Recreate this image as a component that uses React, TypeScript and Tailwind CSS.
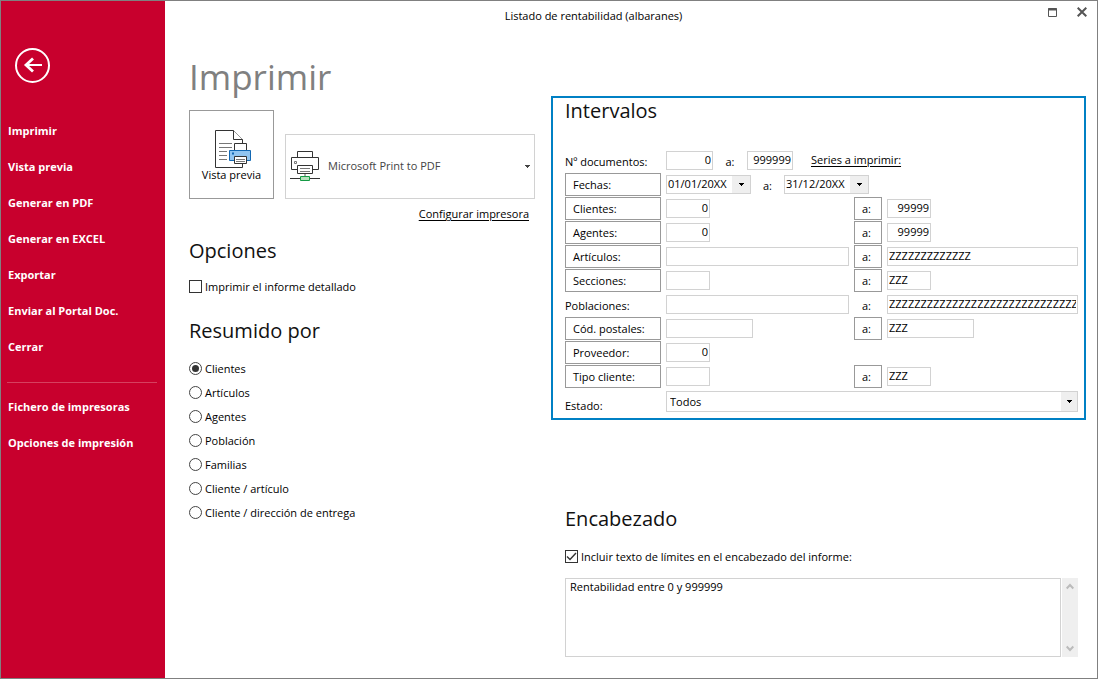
import { ReactNode } from "react";

const mainActions = [
  "Imprimir",
  "Vista previa",
  "Generar en PDF",
  "Generar en EXCEL",
  "Exportar",
  "Enviar al Portal Doc.",
  "Cerrar",
];

const printerActions = ["Fichero de impresoras", "Opciones de impresión"];

const groupings = [
  "Clientes",
  "Artículos",
  "Agentes",
  "Población",
  "Familias",
  "Cliente / artículo",
  "Cliente / dirección de entrega",
];

type Size = "short" | "medium" | "full";

type Range = {
  label: string;
  size: Size;
  from?: string;
  to?: string;
  numeric?: boolean;
  plain?: boolean;
  single?: boolean;
};

const ranges: Range[] = [
  { label: "Clientes:", size: "short", from: "0", to: "99999", numeric: true },
  { label: "Agentes:", size: "short", from: "0", to: "99999", numeric: true },
  { label: "Artículos:", size: "full", to: "ZZZZZZZZZZZZZ" },
  { label: "Secciones:", size: "short", to: "ZZZ" },
  { label: "Poblaciones:", size: "full", to: "ZZZZZZZZZZZZZZZZZZZZZZZZZZZZZZZZ", plain: true },
  { label: "Cód. postales:", size: "medium", to: "ZZZ" },
  { label: "Proveedor:", size: "short", from: "0", numeric: true, single: true },
  { label: "Tipo cliente:", size: "short", to: "ZZZ" },
];

const sizes: Record<Size, string> = {
  short: "w-11",
  medium: "w-[87px]",
  full: "w-full",
};

const rowGrid = "grid h-6 grid-cols-[96px_183fr_28px_191fr] items-start gap-x-[5px]";

const BackIcon = () => (
  <svg width="37" height="37" viewBox="0 0 37 37" fill="none" stroke="white">
    <circle cx="18.5" cy="18.5" r="16.5" strokeWidth="2" />
    <path d="M28 18H12" strokeWidth="2" />
    <path d="M19 11.5L12 18L19 24.5" strokeWidth="2.8" />
  </svg>
);

const PreviewIcon = () => (
  <svg className="ml-1" width="37" height="38" viewBox="0 0 37 38" fill="white" stroke="#333">
    <path d="M.5 .5H18.5L27.5 9.5V37.5H.5Z" />
    <path d="M18.5 .5V9.5H27.5" />
    <path d="M4 13.5H17M4 17.5H17M4 21.5H12M4 25.5H12M4 29.5H12" stroke="#777" />
    <path d="M19.5 20.5V13.5H31.5V20.5" />
    <path d="M14.5 20.5H35.5V30.5H14.5Z" fill="#91c5f0" stroke="#1268b3" />
    <path d="M17 23.5H19" stroke="#1268b3" strokeWidth="2" />
    <path d="M19.5 26.5H31.5V33.5H19.5Z" />
    <path d="M21 29.5H30M21 31.5H30" stroke="#777" />
  </svg>
);

const PrinterIcon = () => (
  <svg width="30" height="31" viewBox="0 0 30 31" fill="white" stroke="#333">
    <path d="M7.5 6.5V.5H22.5V6.5" />
    <path d="M1.5 6.5H28.5V18.5H1.5Z" />
    <path d="M4.5 10.5H6.5V12.5H4.5Z" stroke="#777" />
    <path d="M7.5 14.5H22.5V22.5H7.5Z" />
    <path d="M10 17.5H20M10 20.5H20" stroke="#777" />
    <path d="M15 23V25" stroke="#aaa" strokeWidth="2" />
    <path d="M0 27.5H30" />
    <path d="M10.5 25.5H19.5V29.5H10.5Z" fill="#b5dfbb" stroke="#159a45" />
  </svg>
);

const Caret = () => (
  <svg width="5" height="3" viewBox="0 0 5 3" fill="currentColor">
    <path d="M0 0H5V1H4V2H3V3H2V2H1V1H0Z" />
  </svg>
);

const SectionTitle = ({ children }: { children: ReactNode }) => (
  <h2 className="text-xl leading-[26px] text-[#111]">{children}</h2>
);

const Field = ({ label, value = "", width, numeric }: { label: string; value?: string; width: string; numeric?: boolean }) => (
  <input
    type="text"
    aria-label={label}
    defaultValue={value}
    className={`mt-0.5 h-[19px] min-w-0 border border-[#d2d2d2] bg-white px-px pb-0.5 outline-none ${width} ${numeric ? "text-right" : ""}`}
  />
);

const DateField = ({ label, value }: { label: string; value: string }) => (
  <div className="mt-0.5 flex h-[19px] w-[85px] border border-[#d2d2d2]">
    <input type="text" aria-label={label} defaultValue={value} className="min-w-0 flex-1 bg-white pb-px pl-px outline-none" />
    <button type="button" aria-label={`Abrir calendario: ${label}`} className="flex w-[18px] items-center justify-center bg-[#efefef]">
      <Caret />
    </button>
  </div>
);

const LabelButton = ({ children }: { children: ReactNode }) => (
  <button type="button" className="h-[23px] border border-[#999] bg-white pl-[7px] pt-0.5 text-left">
    {children}
  </button>
);

const RangeRow = ({ range }: { range: Range }) => (
  <div className={rowGrid}>
    {range.plain ? <span className="pt-px leading-6">{range.label}</span> : <LabelButton>{range.label}</LabelButton>}
    <Field label={`${range.label} desde`} value={range.from} width={sizes[range.size]} numeric={range.numeric} />
    {!range.single && (
      <>
        {range.plain ? <span className="pl-2 pt-px leading-6">a:</span> : <LabelButton>a:</LabelButton>}
        <Field label={`${range.label} hasta`} value={range.to} width={sizes[range.size]} numeric={range.numeric} />
      </>
    )}
  </div>
);

const Sidebar = () => (
  <aside className="w-[164px] shrink-0 bg-[#c8002d] font-bold text-white">
    <button type="button" aria-label="Volver" className="ml-[13px] mt-[46px] block">
      <BackIcon />
    </button>
    <nav className="mt-[29px]">
      {mainActions.map((action) => (
        <a key={action} href="#" className="block pl-[7px] leading-9">
          {action}
        </a>
      ))}
      <hr className="mb-1.5 ml-1.5 mr-2 mt-[17px] border-[#d6405f]" />
      {printerActions.map((action) => (
        <a key={action} href="#" className="block pl-[7px] leading-9">
          {action}
        </a>
      ))}
    </nav>
  </aside>
);

const TitleBar = () => (
  <header className="flex h-[30px] items-center">
    <h1 className="flex-1 text-center">Listado de rentabilidad (albaranes)</h1>
    <div className="flex w-[75px] items-center justify-end gap-5 pb-2 pr-2.5 text-[#555]">
      <button type="button" aria-label="Maximizar">
        <svg width="9" height="9" viewBox="0 0 9 9" fill="none" stroke="currentColor">
          <path d="M.5 .5H8.5V8.5H.5Z" />
          <path d="M0 1.5H9" strokeWidth="2" />
        </svg>
      </button>
      <button type="button" aria-label="Cerrar ventana">
        <svg width="10" height="10" viewBox="0 0 10 10" fill="none" stroke="currentColor" strokeWidth="2">
          <path d="M.7 .7L9.3 9.3M9.3 .7L.7 9.3" />
        </svg>
      </button>
    </div>
  </header>
);

const PrintOptions = () => (
  <section className="pt-5">
    <h2 className="text-[35px] leading-[52px] text-[#808080]">Imprimir</h2>
    <div className="mt-[7px] flex items-end gap-[11px]">
      <button type="button" className="flex h-[89px] w-[85px] shrink-0 flex-col items-center border border-[#999] pt-[19px]">
        <PreviewIcon />
        <span className="leading-[14px]">Vista previa</span>
      </button>
      <div className="relative flex-1">
        <select aria-label="Impresora" className="h-[65px] w-full appearance-none border border-[#d2d2d2] bg-white pl-[42px] text-[#444]">
          <option>Microsoft Print to PDF</option>
        </select>
        <span className="pointer-events-none absolute inset-y-0 left-[5px] flex items-center">
          <PrinterIcon />
        </span>
        <span className="pointer-events-none absolute inset-y-0 right-[5px] flex items-center text-[#444]">
          <Caret />
        </span>
      </div>
    </div>
    <div className="mt-[3px] pr-1.5 text-right leading-6">
      <a href="#" className="underline underline-offset-2">Configurar impresora</a>
    </div>

    <div className="mt-3">
      <SectionTitle>Opciones</SectionTitle>
      <label className="mt-[11px] flex h-6 items-center gap-[3px]">
        <input type="checkbox" className="mb-px size-[13px] appearance-none border border-[#333]" />
        Imprimir el informe detallado
      </label>
    </div>

    <fieldset className="mt-[19px]">
      <legend>
        <SectionTitle>Resumido por</SectionTitle>
      </legend>
      <div className="mt-[13px]">
        {groupings.map((name, i) => (
          <label key={name} className="flex h-6 items-center gap-[3px]">
            <input
              type="radio"
              name="resumido"
              defaultChecked={i === 0}
              className="mb-px flex size-[13px] appearance-none items-center justify-center rounded-full border border-[#444] before:size-[7px] before:rounded-full checked:before:bg-[#333]"
            />
            {name}
          </label>
        ))}
      </div>
    </fieldset>
  </section>
);

const Intervals = () => (
  <section className="border-2 border-[#0080c4] pl-3 pr-1.5">
    <SectionTitle>Intervalos</SectionTitle>
    <div className="mt-[25px]">
      <div className="flex h-6 items-start">
        <span className="w-[101px] pt-px leading-6">Nº documentos:</span>
        <Field label="Nº documentos desde" value="0" width="w-[47px]" numeric />
        <span className="w-[34px] pt-px text-center leading-6">a:</span>
        <Field label="Nº documentos hasta" value="999999" width="w-[46px]" numeric />
        <a href="#" className="ml-[18px] leading-[22px] underline underline-offset-2">Series a imprimir:</a>
      </div>
      <div className="flex h-6 items-start">
        <div className="mr-[5px] grid w-24">
          <LabelButton>Fechas:</LabelButton>
        </div>
        <DateField label="Fecha desde" value="01/01/20XX" />
        <span className="w-[33px] pt-px text-center leading-6">a:</span>
        <DateField label="Fecha hasta" value="31/12/20XX" />
      </div>
      {ranges.map((range) => (
        <RangeRow key={range.label} range={range} />
      ))}
      <div className="flex items-start pt-0.5">
        <label htmlFor="estado" className="w-[101px] pt-[3px] leading-6">Estado:</label>
        <div className="relative flex-1">
          <select id="estado" className="block h-[21px] w-full appearance-none border border-[#d2d2d2] bg-white pl-[3px] pt-0.5">
            <option>Todos</option>
          </select>
          <span className="pointer-events-none absolute inset-y-px right-px flex w-4 items-center justify-center bg-[#efefef]">
            <Caret />
          </span>
        </div>
      </div>
    </div>
  </section>
);

const HeaderText = () => (
  <section className="mt-[86px] pl-3.5 pr-2">
    <SectionTitle>Encabezado</SectionTitle>
    <label className="mt-[13px] flex h-6 items-center gap-[3px]">
      <span className="relative mb-px size-[13px]">
        <input type="checkbox" defaultChecked className="peer block size-[13px] appearance-none border border-[#333]" />
        <svg className="pointer-events-none absolute inset-0 hidden peer-checked:block" width="13" height="13" viewBox="0 0 13 13" fill="none" stroke="#333" strokeWidth="1.4">
          <path d="M2 6.5L5 9.5L11 3" />
        </svg>
      </span>
      Incluir texto de límites en el encabezado del informe:
    </label>
    <div className="mt-[9px] flex h-[79px] gap-px">
      <textarea
        aria-label="Texto del encabezado"
        defaultValue="Rentabilidad entre 0 y 999999"
        className="flex-1 resize-none overflow-hidden border border-[#d2d2d2] px-1 leading-4 outline-none"
      />
      <div className="flex w-4 flex-col items-center justify-between bg-[#efefef] py-[5px] text-[#bbb]">
        <button type="button" aria-label="Subir">
          <svg width="8" height="7" viewBox="0 0 8 7" fill="none" stroke="currentColor" strokeWidth="2">
            <path d="M.7 5.5L4 2L7.3 5.5" />
          </svg>
        </button>
        <button type="button" aria-label="Bajar">
          <svg width="8" height="7" viewBox="0 0 8 7" fill="none" stroke="currentColor" strokeWidth="2">
            <path d="M.7 1.5L4 5L7.3 1.5" />
          </svg>
        </button>
      </div>
    </div>
  </section>
);

const App = () => {
  return (
    <div className="flex min-h-screen border border-[#808080] bg-white font-['Open_Sans',sans-serif] text-[11px] text-black">
      <Sidebar />
      <div className="min-w-0 flex-1">
        <TitleBar />
        <main className="grid grid-cols-[346fr_535fr] gap-4 pl-6 pr-[11px]">
          <PrintOptions />
          <div className="min-w-0 pt-[65px]">
            <Intervals />
            <HeaderText />
          </div>
        </main>
      </div>
    </div>
  );
};

export default App;
